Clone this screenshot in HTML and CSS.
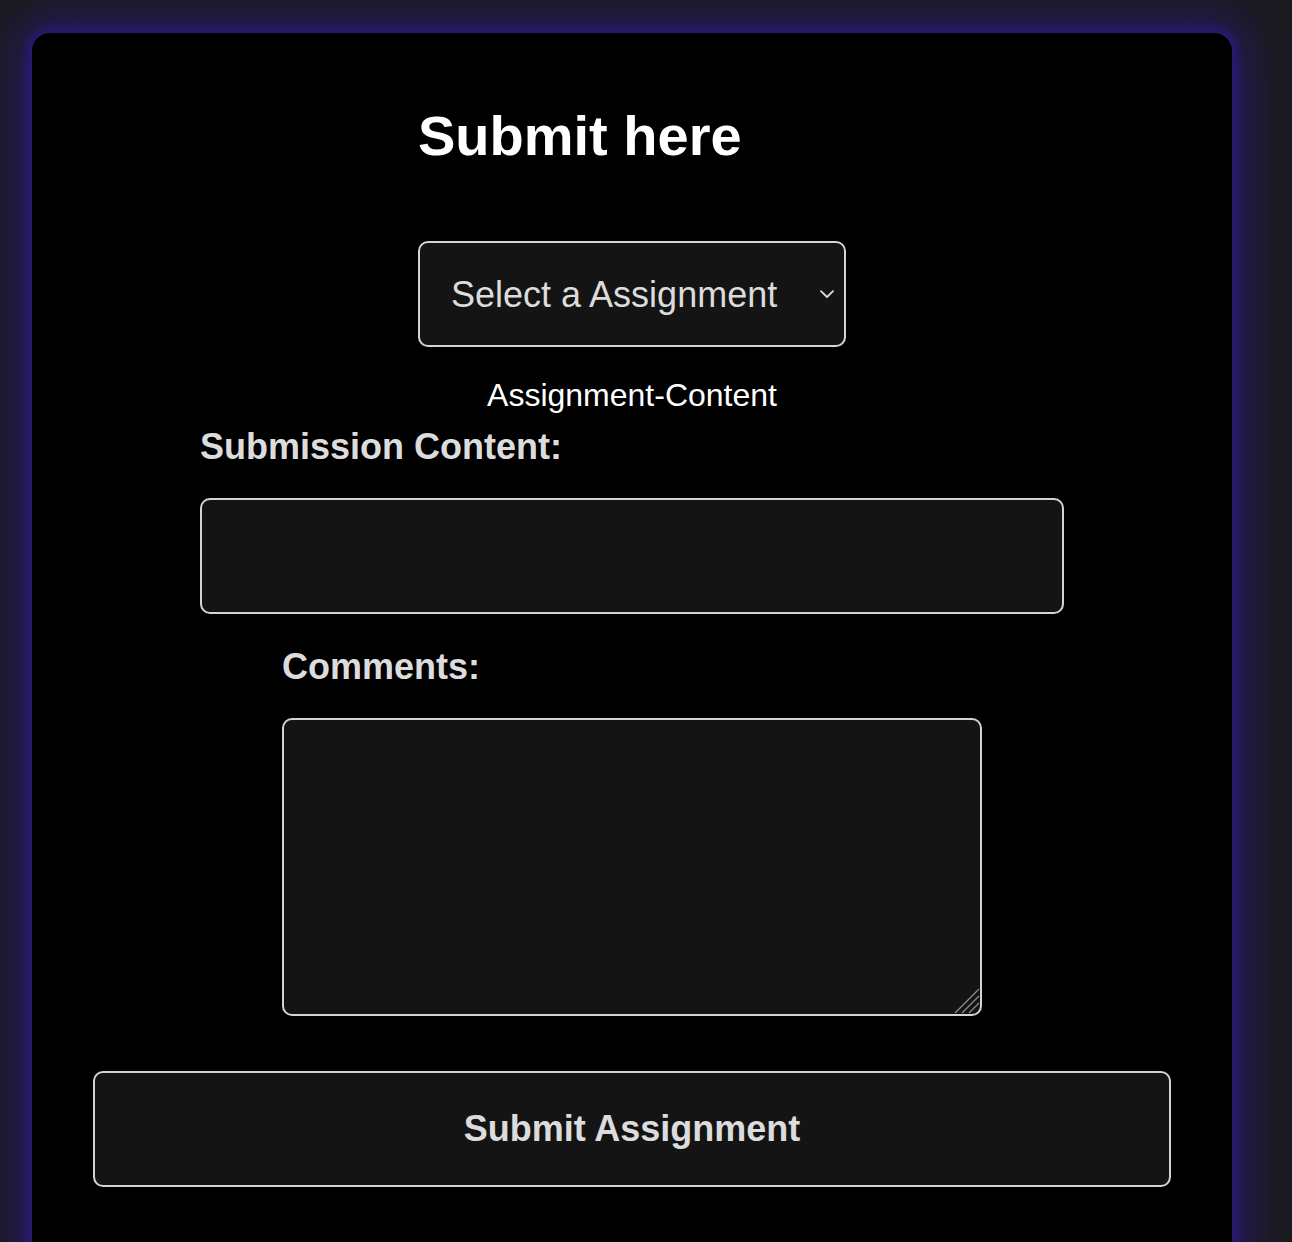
FILE: index.html
```html
<!DOCTYPE html>
<html lang="en">
<head>
<meta charset="utf-8">
<title>Submit here</title>
<link rel="stylesheet" href="styles.css">
</head>
<body>
<main class="card">
  <div class="head">
    <h1 class="title">Submit here</h1>
    <div class="select-wrap">
      <select class="select">
        <option>Select a Assignment</option>
      </select>
      <svg class="chevron" width="16" height="10" viewBox="0 0 16 10" aria-hidden="true"><path d="M2 2.2 L8 8 L14 2.2" fill="none" stroke="#dcdcdc" stroke-width="1.8" stroke-linecap="round" stroke-linejoin="round"/></svg>
    </div>
  </div>
  <p class="assignment-content">Assignment-Content</p>
  <div class="field field-wide">
    <label class="label" for="sub">Submission Content:</label>
    <input class="input" id="sub" type="text">
  </div>
  <div class="field field-narrow">
    <label class="label" for="com">Comments:</label>
    <div class="textarea-wrap">
      <textarea class="textarea" id="com"></textarea>
      <svg class="grip" width="26" height="26" viewBox="0 0 26 26" aria-hidden="true"><path d="M1 25 L25 1 M8 25 L25 8 M15 25 L25 15" fill="none" stroke="#8a8a8a" stroke-width="1.3"/></svg>
    </div>
  </div>
  <button class="submit" type="button">Submit Assignment</button>
</main>
</body>
</html>
```

FILE: styles.css
```css
html, body {
  margin: 0;
  padding: 0;
}
body {
  background: #1b1a1f;
  font-family: "Liberation Sans", Arial, Helvetica, sans-serif;
  height: 1242px;
  overflow: hidden;
  padding: 33px 60px 0 32px;
  box-sizing: border-box;
}
.card {
  width: 1200px;
  min-height: 1300px;
  background: #000;
  border-radius: 18px;
  box-shadow: 0 0 10px 4px #281c7a, 0 0 44px 14px rgba(40, 28, 120, 0.8);
  display: flex;
  flex-direction: column;
  align-items: center;
  box-sizing: border-box;
  padding-top: 71px;
}
.head {
  width: 428px;
  display: flex;
  flex-direction: column;
}
.title {
  margin: 0;
  font-size: 56px;
  line-height: 64px;
  font-weight: 700;
  color: #fff;
}
.select-wrap {
  position: relative;
  margin-top: 73px;
  width: 428px;
  height: 106px;
}
.select {
  appearance: none;
  -webkit-appearance: none;
  width: 100%;
  height: 100%;
  box-sizing: border-box;
  background: #141414;
  border: 2px solid #d4d4d4;
  border-radius: 10px;
  color: #dcdcdc;
  font-family: inherit;
  font-size: 36px;
  padding: 0 0 0 31px;
  outline: none;
}
.chevron {
  position: absolute;
  right: 11px;
  top: 50%;
  transform: translateY(-50%);
}
.assignment-content {
  margin: 30px 0 0;
  font-size: 32px;
  line-height: 36px;
  color: #fff;
}
.field {
  display: flex;
  flex-direction: column;
}
.field-wide {
  width: 864px;
  margin-top: 14px;
}
.field-narrow {
  width: 700px;
  margin-top: 33px;
}
.label {
  font-size: 36px;
  line-height: 40px;
  font-weight: 700;
  color: #dcdcdc;
  margin-bottom: 31px;
}
.input,
.textarea,
.submit {
  box-sizing: border-box;
  background: #141414;
  border: 2px solid #d4d4d4;
  border-radius: 10px;
  color: #dcdcdc;
  font-family: inherit;
  outline: none;
}
.input {
  width: 864px;
  height: 116px;
  font-size: 36px;
  padding: 0 20px;
}
.textarea-wrap {
  position: relative;
  width: 700px;
  height: 298px;
}
.textarea {
  width: 700px;
  height: 298px;
  font-size: 36px;
  padding: 10px 20px;
  display: block;
  resize: none;
}
.grip {
  position: absolute;
  right: 2px;
  bottom: 2px;
}
.submit {
  margin-top: 55px;
  width: 1078px;
  height: 116px;
  font-size: 36px;
  font-weight: 700;
  cursor: pointer;
}
```
